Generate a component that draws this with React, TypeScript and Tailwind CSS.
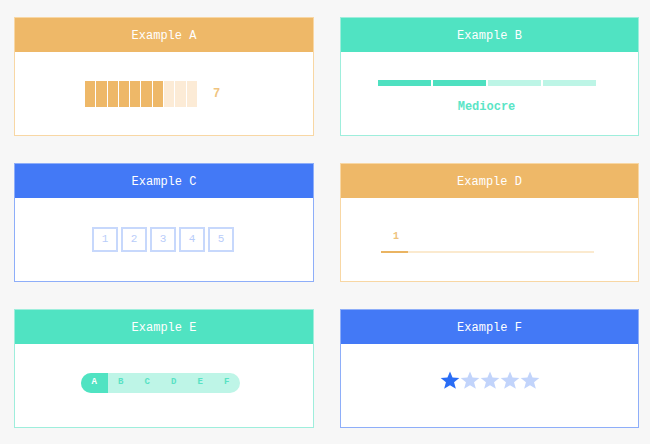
import React from "react";

type Tone = "orange" | "teal" | "blue";

const headerCls: Record<Tone, string> = {
  orange: "bg-[#eeb868]",
  teal: "bg-[#50e3c2]",
  blue: "bg-[#4379f6]",
};

const borderCls: Record<Tone, string> = {
  orange: "border-[#f8d7a4]",
  teal: "border-[#9eeedc]",
  blue: "border-[#8eaef9]",
};

function Card({ title, tone, children }: { title: string; tone: Tone; children: React.ReactNode }) {
  return (
    <div className={"border bg-white flex flex-col h-[119px] " + borderCls[tone]}>
      <div
        className={
          "h-[34px] pt-[2px] flex items-center justify-center text-white text-[12px] " + headerCls[tone]
        }
      >
        {title}
      </div>
      <div className="flex-1 flex flex-col justify-center">{children}</div>
    </div>
  );
}

function Star({ filled }: { filled: boolean }) {
  return (
    <svg width="20" height="19" viewBox="0 0 24 23">
      <polygon
        points="12,0.5 15.1,8 23.3,8.4 16.9,13.6 19.1,21.6 12,17.1 4.9,21.6 7.1,13.6 0.7,8.4 8.9,8"
        fill={filled ? "#2a6df5" : "#c2d4fb"}
      />
    </svg>
  );
}

export default function App() {
  const segs = Array.from({ length: 10 }, (_, i) => i < 7);
  const letters = ["A", "B", "C", "D", "E", "F"];
  return (
    <div
      className="w-[650px] h-[444px] bg-[#f7f7f7] pt-[17px] pl-[14px]"
      style={{ fontFamily: '"Liberation Mono", "DejaVu Sans Mono", monospace' }}
    >
      <div className="grid grid-cols-[300px_299px] gap-x-[26px] gap-y-[27px]">
        <Card title="Example A" tone="orange">
          <div className="flex items-center pl-[70px] pt-px">
            <div className="flex gap-px">
              {segs.map((on, i) => (
                <div key={i} className={"w-[10.3px] h-[26px] " + (on ? "bg-[#eeb868]" : "bg-[#fcebd6]")} />
              ))}
            </div>
            <span className="ml-[16px] text-[12px] font-bold text-[#f0c47e]">7</span>
          </div>
        </Card>

        <Card title="Example B" tone="teal">
          <div className="flex flex-col items-start pl-[37px] pt-[8px]">
            <div className="flex gap-[2px]">
              {[true, true, false, false].map((on, i) => (
                <div key={i} className={"w-[53px] h-[6px] " + (on ? "bg-[#4ee0c0]" : "bg-[#bdf5e6]")} />
              ))}
            </div>
            <div className="w-[217px] text-center mt-[12px] text-[12px] font-bold text-[#5be5c6]">Mediocre</div>
          </div>
        </Card>

        <Card title="Example C" tone="blue">
          <div className="flex gap-[3px] pl-[77px]">
            {[1, 2, 3, 4, 5].map((n) => (
              <div
                key={n}
                className="w-[26px] h-[25px] border-2 border-[#c7d8fc] flex items-center justify-center text-[11px] text-[#b9cdfa]"
              >
                {n}
              </div>
            ))}
          </div>
        </Card>

        <Card title="Example D" tone="orange">
          <div className="pl-[40px] pt-[6px]">
            <div className="pl-[12px] text-[10px] font-bold text-[#eec27c] leading-none">1</div>
            <div className="mt-[9px] w-[213px] h-[2px] bg-[#fbeacf] flex">
              <div className="w-[27px] h-[2px] bg-[#eab462]" />
            </div>
          </div>
        </Card>

        <Card title="Example E" tone="teal">
          <div className="pl-[66px] pb-[5px]">
            <div className="flex w-[159px] h-[20px] rounded-full overflow-hidden bg-[#bef5e7]">
              {letters.map((l, i) => (
                <div
                  key={l}
                  className={
                    "w-[26.5px] flex items-center justify-center text-[9px] font-bold " +
                    (i === 0 ? "bg-[#50e3c2] text-white" : "text-[#58e2c4]")
                  }
                >
                  {l}
                </div>
              ))}
            </div>
          </div>
        </Card>

        <Card title="Example F" tone="blue">
          <div className="flex justify-center pb-[10px]">
            {[true, false, false, false, false].map((on, i) => (
              <Star key={i} filled={on} />
            ))}
          </div>
        </Card>
      </div>
    </div>
  );
}
